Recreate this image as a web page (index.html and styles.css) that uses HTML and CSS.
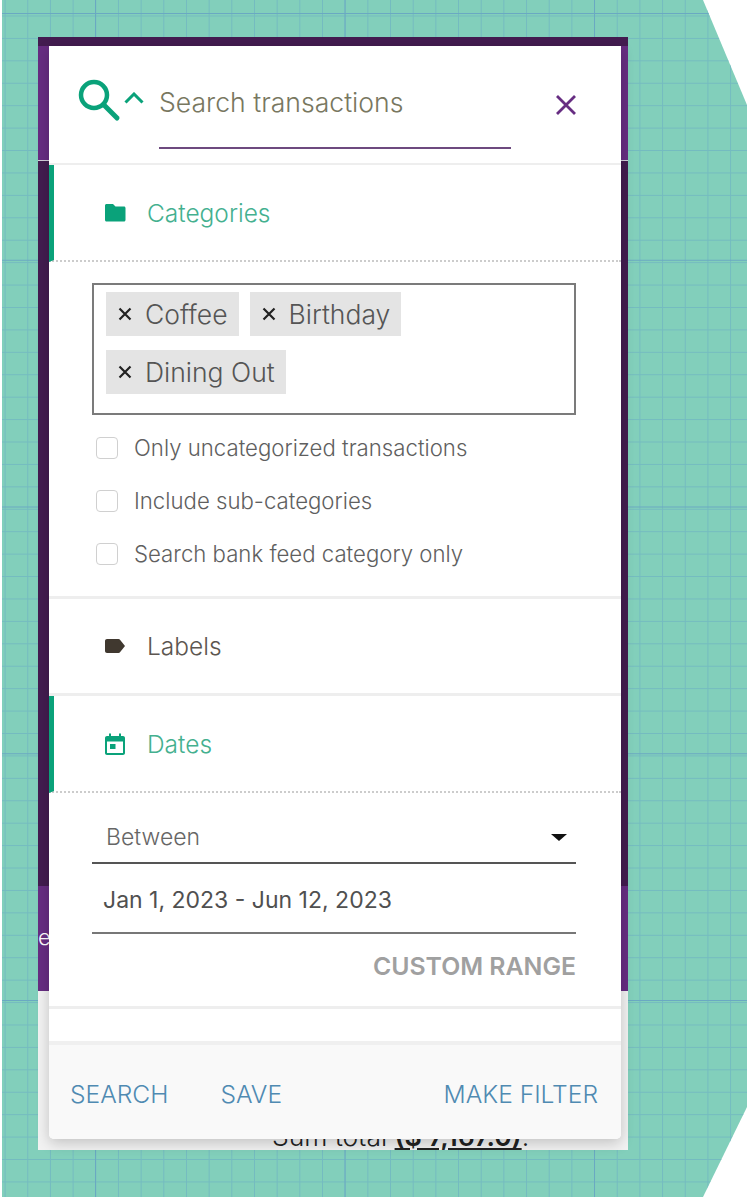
FILE: index.html
```html
<!DOCTYPE html>
<html lang="en">
<head>
    <meta charset="UTF-8">
    <meta name="viewport" content="width=device-width, initial-scale=1.0">
    <title>Search transactions</title>
    <link rel="stylesheet" href="styles.css">
</head>
<body>
<div class="canvas">
    <div class="app">
        <div class="app-bar"></div>
        <div class="app-head"></div>
        <div class="app-dark"></div>
        <div class="app-band"><span class="band-text">e</span></div>
        <div class="app-foot"><span class="sum-text">Sum total <u class="sum-value">($ 7,167.0)</u>.</span></div>
    </div>

    <div class="modal">
        <div class="search-head">
            <svg class="icon-search" viewBox="0 0 44 44" aria-hidden="true">
                <circle cx="16" cy="16" r="13" fill="none" stroke="#0aa27a" stroke-width="4.5"/>
                <path d="M26 26 L39 39" fill="none" stroke="#0aa27a" stroke-width="5" stroke-linecap="round"/>
            </svg>
            <svg class="icon-caret" viewBox="0 0 20 12" aria-hidden="true">
                <path d="M1.5 10.5 L10 2 L18.5 10.5" fill="none" stroke="#0aa27a" stroke-width="3"/>
            </svg>
            <div class="search-box">Search transactions</div>
            <svg class="icon-close" viewBox="0 0 20 20" aria-hidden="true">
                <path d="M1 1 L19 19 M19 1 L1 19" fill="none" stroke="#672d82" stroke-width="2.8"/>
            </svg>
        </div>

        <div class="section section-open">
            <svg class="section-icon" viewBox="0 0 24 24" aria-hidden="true">
                <path d="M2 4.5 C2 3.7 2.7 3 3.5 3 H10 L12.5 5.5 H21 C21.8 5.5 22.5 6.2 22.5 7 V19 C22.5 19.8 21.8 20.5 21 20.5 H3.5 C2.7 20.5 2 19.8 2 19 Z" fill="#0aa27a"/>
            </svg>
            <span>Categories</span>
        </div>
        <div class="section-body categories">
            <div class="tag-box">
                <span class="tag">
                    <svg class="tag-x" viewBox="0 0 14 14" aria-hidden="true"><path d="M1.5 1.5 L12.5 12.5 M12.5 1.5 L1.5 12.5" fill="none" stroke="#222222" stroke-width="2.2"/></svg>
                    Coffee
                </span>
                <span class="tag">
                    <svg class="tag-x" viewBox="0 0 14 14" aria-hidden="true"><path d="M1.5 1.5 L12.5 12.5 M12.5 1.5 L1.5 12.5" fill="none" stroke="#222222" stroke-width="2.2"/></svg>
                    Birthday
                </span>
                <span class="tag">
                    <svg class="tag-x" viewBox="0 0 14 14" aria-hidden="true"><path d="M1.5 1.5 L12.5 12.5 M12.5 1.5 L1.5 12.5" fill="none" stroke="#222222" stroke-width="2.2"/></svg>
                    Dining Out
                </span>
            </div>
            <label class="check"><span class="check-box"></span>Only uncategorized transactions</label>
            <label class="check"><span class="check-box"></span>Include sub-categories</label>
            <label class="check"><span class="check-box"></span>Search bank feed category only</label>
        </div>

        <div class="section section-plain">
            <svg class="section-icon" viewBox="0 0 24 24" aria-hidden="true">
                <path d="M2 7 C2 5.9 2.9 5 4 5 H15.5 C16.2 5 16.8 5.3 17.2 5.9 L22 12 L17.2 18.1 C16.8 18.7 16.2 19 15.5 19 H4 C2.9 19 2 18.1 2 17 Z" fill="#40382f"/>
            </svg>
            <span>Labels</span>
        </div>

        <div class="section section-open">
            <svg class="section-icon" viewBox="0 0 24 24" aria-hidden="true">
                <path d="M6 1.5 H8 V4 H16 V1.5 H18 V4 H20 C21.1 4 22 4.9 22 6 V21 C22 22.1 21.1 23 20 23 H4 C2.9 23 2 22.1 2 21 V6 C2 4.9 2.9 4 4 4 H6 Z M4 9.5 V21 H20 V9.5 Z M7 12 H12.5 V17 H7 Z" fill="#0aa27a" fill-rule="evenodd"/>
            </svg>
            <span>Dates</span>
        </div>
        <div class="section-body dates">
            <div class="select">
                <span>Between</span>
                <span class="select-arrow"></span>
            </div>
            <div class="date-input">Jan 1, 2023 - Jun 12, 2023</div>
            <div class="custom-range">CUSTOM RANGE</div>
        </div>

        <div class="section-empty"></div>

        <div class="modal-foot">
            <div class="foot-left">
                <span>SEARCH</span>
                <span>SAVE</span>
            </div>
            <span>MAKE FILTER</span>
        </div>
    </div>
</div>
</body>
</html>
```

FILE: styles.css
```css
html, body {
    margin: 0;
    padding: 0;
    background-color: #ffffff;
}

body {
    width: 750px;
    height: 1197px;
    overflow: hidden;
    font-family: 'Inter', 'Lato', sans-serif;
    font-weight: 300;
}

/* Green grid sheet, cut at the right corners */
.canvas {
    position: relative;
    box-sizing: border-box;
    width: 745px;
    height: 1197px;
    margin-left: 2px;
    padding-top: 37px;
    padding-left: 36px;
    background-color: #82cfbb;
    background-image:
        linear-gradient(to right, #6aa9c2 1px, transparent 1px),
        linear-gradient(to bottom, #6aa9c2 1px, transparent 1px),
        linear-gradient(to right, #74bbc0 1px, transparent 1px),
        linear-gradient(to bottom, #74bbc0 1px, transparent 1px);
    background-size: 249.5px 246.75px, 249.5px 246.75px, 22.68px 22.43px, 22.68px 22.43px;
    background-position: 93px 0, 0 13px, 2.6px 0, 0 15.5px;
    clip-path: polygon(0 0, 701px 0, 745px 105px, 745px 1107px, 701px 1197px, 0 1197px);
}

/* App page behind the modal */
.app {
    display: flex;
    flex-direction: column;
    width: 590px;
    height: 1113px;
}

.app-bar {
    height: 9px;
    background-color: #431c50;
}

.app-head {
    height: 114px;
    border-bottom: 1px solid #d5d0dc;
    background-color: #672d82;
}

.app-dark {
    height: 725px;
    background-color: #431c50;
}

.app-band {
    height: 105px;
    background-color: #672d82;
    color: #ffffff;
    font-size: 22px;
    overflow: hidden;
}

.band-text {
    display: block;
    margin-top: 38px;
}

.app-foot {
    flex: 1;
    position: relative;
    background-color: #f2f2f2;
    color: #222222;
    font-size: 26.5px;
    overflow: hidden;
}

.sum-text {
    position: absolute;
    top: 129px;
    left: 234px;
    white-space: nowrap;
}

.sum-value {
    font-weight: 600;
}

/* Modal over the page */
.modal {
    position: absolute;
    top: 46px;
    left: 47px;
    display: flex;
    flex-direction: column;
    width: 572px;
    height: 1093px;
    border-radius: 0 0 5px 5px;
    background-color: #ffffff;
    box-shadow: 0 4px 14px rgba(0, 0, 0, 0.2);
}

.search-head {
    display: flex;
    box-sizing: border-box;
    height: 119px;
    padding: 33px 0 0 29px;
    border-bottom: 2px solid #eeeeee;
}

.icon-search {
    width: 44px;
    height: 44px;
}

.icon-caret {
    width: 20px;
    height: 12px;
    margin: 13px 0 0 2px;
}

.search-box {
    box-sizing: border-box;
    width: 352px;
    height: 70px;
    margin-left: 15px;
    padding-top: 7px;
    border-bottom: 2px solid #6d4a7f;
    color: #78775f;
    font-size: 26.6px;
}

.icon-close {
    width: 20px;
    height: 20px;
    margin: 16px 0 0 45px;
}

.section {
    display: flex;
    align-items: center;
    box-sizing: border-box;
    height: 97px;
    padding-left: 54px;
    font-size: 24.5px;
}

.section-icon {
    width: 24px;
    height: 24px;
    margin-right: 20px;
}

.section-open {
    border-left: 5px solid #0aa27a;
    padding-left: 49px;
    border-bottom: 2px dotted #cccccc;
    color: #44b08f;
}

.section-plain {
    color: #5c5650;
    border-bottom: 3px solid #eeeeee;
}

.section-body {
    box-sizing: border-box;
    padding: 0 45px 0 43px;
}

.categories {
    height: 337px;
    padding-top: 21px;
    border-bottom: 3px solid #eeeeee;
}

.tag-box {
    display: flex;
    flex-wrap: wrap;
    align-content: flex-start;
    gap: 14px 11px;
    box-sizing: border-box;
    height: 132px;
    margin-bottom: 6px;
    padding: 7px 12px;
    border: 2px solid #7b7b7b;
}

.tag {
    display: flex;
    align-items: center;
    height: 44px;
    padding: 0 11px 0 12px;
    background-color: #e4e4e4;
    color: #555555;
    font-size: 26.5px;
}

.tag-x {
    width: 14px;
    height: 14px;
    margin-right: 13px;
}

.check {
    display: flex;
    align-items: center;
    height: 53px;
    color: #5f5f5f;
    font-size: 22.2px;
}

.check-box {
    width: 20px;
    height: 20px;
    margin: 0 16px 0 4px;
    border: 1px solid #d0d0d0;
    border-radius: 4px;
}

.dates {
    height: 216px;
    padding-top: 19px;
    border-bottom: 3px solid #eeeeee;
}

.select {
    display: flex;
    align-items: center;
    justify-content: space-between;
    box-sizing: border-box;
    height: 52px;
    padding: 0 9px 0 14px;
    border-bottom: 2px solid #555555;
    color: #666666;
    font-size: 23px;
}

.select-arrow {
    width: 0;
    height: 0;
    border-top: 7px solid #111111;
    border-left: 8px solid transparent;
    border-right: 8px solid transparent;
}

.date-input {
    box-sizing: border-box;
    height: 70px;
    padding: 22px 0 0 11px;
    border-bottom: 2px solid #777777;
    color: #505050;
    font-size: 23px;
    font-weight: 400;
}

.custom-range {
    margin-top: 17px;
    text-align: right;
    color: #a0a0a0;
    font-size: 24.8px;
    font-weight: 600;
}

.section-empty {
    height: 32px;
}

.modal-foot {
    display: flex;
    align-items: center;
    justify-content: space-between;
    flex: 1;
    padding: 4px 23px 0 21px;
    border-top: 4px solid #f0f0f0;
    border-radius: 0 0 5px 5px;
    background-color: #f9f9f9;
    color: #4f8ab2;
    font-size: 24.6px;
}

.foot-left {
    display: flex;
    gap: 52px;
}
```
